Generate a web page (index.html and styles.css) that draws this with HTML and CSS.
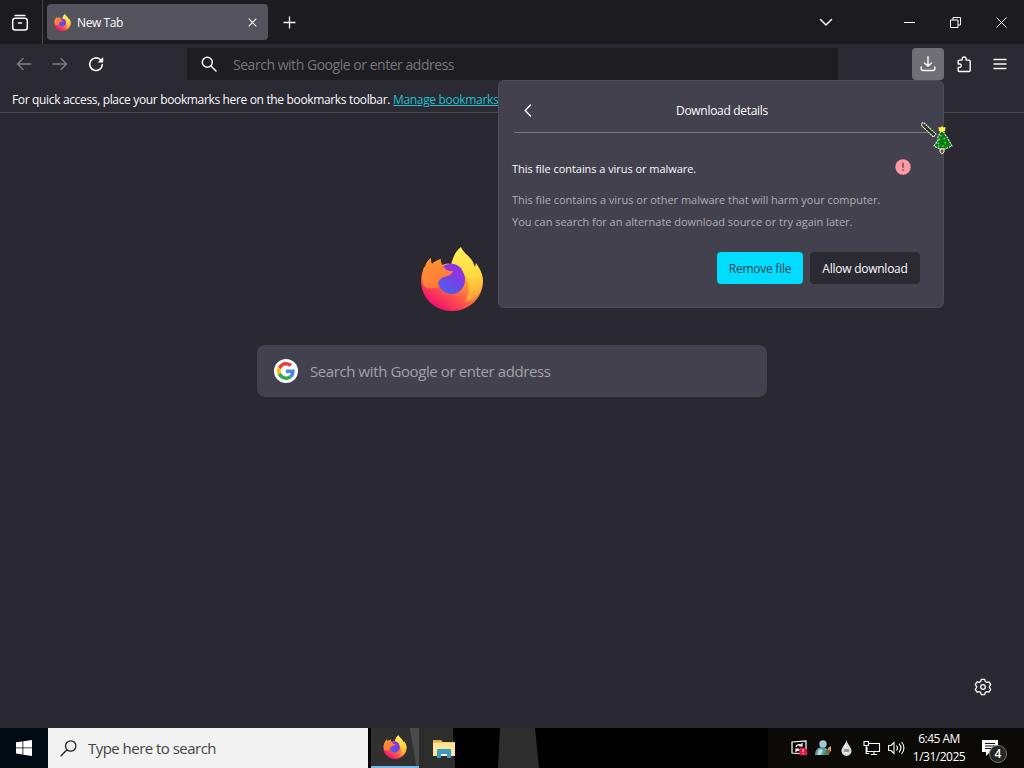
FILE: index.html
```html
<!DOCTYPE html>
<html lang="en">
  <head>
    <meta charset="utf-8">
    <title>New Tab</title>
    <link rel="stylesheet" href="styles.css">
  </head>
  <body>
    <!-- shared logo -->
    <svg class="defs" width="0" height="0">
      <defs>
        <linearGradient id="flame" x1="0.9" y1="0.15" x2="0.3" y2="0.95">
          <stop offset="0" stop-color="#ffd23a"/>
          <stop offset="0.35" stop-color="#ffa436"/>
          <stop offset="0.65" stop-color="#ff5f45"/>
          <stop offset="1" stop-color="#f5156c"/>
        </linearGradient>
        <linearGradient id="tail" x1="0.4" y1="0" x2="0.5" y2="1">
          <stop offset="0" stop-color="#fff25a"/>
          <stop offset="0.55" stop-color="#ffd83f"/>
          <stop offset="1" stop-color="#ff9c36"/>
        </linearGradient>
        <linearGradient id="globe" x1="0.8" y1="0" x2="0.3" y2="1">
          <stop offset="0" stop-color="#a12be0"/>
          <stop offset="0.5" stop-color="#7542e5"/>
          <stop offset="1" stop-color="#4a62e8"/>
        </linearGradient>
        <linearGradient id="head" x1="0" y1="0" x2="0.8" y2="1">
          <stop offset="0" stop-color="#ff9a30"/>
          <stop offset="1" stop-color="#ff7139"/>
        </linearGradient>
        <symbol id="firefox" viewBox="0 0 64 64">
          <path fill="url(#flame)" d="M5 20c1-4 3-7 6-9 0 3 0 5 1 6 2-2 5-4 9-5-1 2 0 4 1 6 4-2 8-2 12 0L41 6c4 4 8 7 12 12l2 3 1-3c5 6 7 10 7 16 0 17-14 30-31 30S1 51 1 34c0-5 1-10 4-14z"/>
          <path fill="url(#tail)" d="M31 18c2-8 4-13 10-18 2 6 9 9 12 15l2 5 1-4c6 8 8 16 5 25-3 8-9 13-16 14 3-6 5-13 3-20-2-8-8-14-17-17z"/>
          <ellipse cx="31.500" cy="33" rx="13.500" ry="14" fill="url(#globe)"/>
          <path fill="#8d36e0" d="M22 20c7-5 14-4 19 1l3 6c-4-3-8-2-10-3l-9 3z"/>
          <path fill="url(#head)" d="M5 20c1-4 3-7 6-9 0 3 0 5 1 6 2-2 5-4 9-5-1 3 1 6 3 8 2 4 5 4 9 4-1 4-5 5-9 6-5 2-7 6-6 11-5-1-9 3-14-2-3-5-2-13 0-19z"/>
        </symbol>
      </defs>
    </svg>

    <div class="tabbar">
      <div class="view">
        <svg width="18" height="18" viewBox="0 0 18 18" fill="none" stroke="#fbfbfe" stroke-width="1.5" stroke-linecap="round"><path d="M4 1.5h10"/><rect x="1.7" y="4.3" width="14.6" height="11.7" rx="2.5"/><path d="M7.5 9h3"/></svg>
      </div>
      <div class="tab">
        <svg width="17" height="17"><use href="#firefox"/></svg>
        <span class="tab-title">New Tab</span>
        <svg class="tab-close" width="9" height="9" viewBox="0 0 9 9" stroke="#fbfbfe" stroke-width="1.1"><path d="M.7.7l7.6 7.6M8.3.7L.7 8.3"/></svg>
      </div>
      <svg class="plus" width="13" height="13" viewBox="0 0 13 13" stroke="#fbfbfe" stroke-width="1.3"><path d="M6.5 .5v12M.5 6.5h12"/></svg>
      <div class="window">
        <svg class="chevron" width="14" height="9" viewBox="0 0 14 9" fill="none" stroke="#fbfbfe" stroke-width="1.5" stroke-linecap="round" stroke-linejoin="round"><path d="M1.5 1.5L7 7l5.500-5.500"/></svg>
        <svg width="11" height="11" viewBox="0 0 11 11" stroke="#fff"><path d="M0 5.500h11"/></svg>
        <svg width="11" height="11" viewBox="0 0 11 11" fill="none" stroke="#fff"><path d="M.5 3h7.500v7.500H.5zM3 3V.5h7.500V8H8"/></svg>
        <svg width="11" height="11" viewBox="0 0 11 11" stroke="#fff"><path d="M.5.5l10 10M10.500.5l-10 10"/></svg>
      </div>
    </div>

    <div class="nav">
      <div class="nav-left">
        <svg class="dim" width="16" height="14" viewBox="0 0 16 14" fill="none" stroke="#fbfbfe" stroke-width="1.4" stroke-linecap="round" stroke-linejoin="round"><path d="M15 7H1.500M7 1.500L1.500 7 7 12.500"/></svg>
        <svg class="dim" width="16" height="14" viewBox="0 0 16 14" fill="none" stroke="#fbfbfe" stroke-width="1.400" stroke-linecap="round" stroke-linejoin="round"><path d="M1 7h13.500M9 1.500L14.500 7 9 12.500"/></svg>
        <svg width="16" height="16" viewBox="0 0 16 16" fill="none" stroke="#fbfbfe" stroke-width="1.6" stroke-linecap="round"><path d="M14.300 8.500A6.300 6.300 0 1 1 12.200 3.500"/><path fill="#fbfbfe" stroke="none" d="M15.200.9v5.600H9.600z"/></svg>
      </div>
      <div class="urlbar">
        <svg width="16" height="16" viewBox="0 0 16 16" fill="none" stroke="#fbfbfe" stroke-width="1.500" stroke-linecap="round"><circle cx="6.300" cy="6.300" r="5"/><path d="M10 10l5 5"/></svg>
        <span>Search with Google or enter address</span>
      </div>
      <div class="nav-right">
        <div class="download">
          <svg width="16" height="16" viewBox="0 0 16 16" fill="none" stroke="#fbfbfe" stroke-width="1.400" stroke-linecap="round" stroke-linejoin="round"><path d="M8 .8v9.400M4.500 7L8 10.300 11.500 7M1.200 11v1.500c0 1.200.8 2 2 2h9.600c1.200 0 2-.8 2-2V11"/></svg>
        </div>
        <svg class="ext" width="16" height="17" viewBox="0 0 16 17" fill="none" stroke="#fbfbfe" stroke-width="1.400" stroke-linejoin="round"><path d="M2.200 8V5.200c0-.7.4-1.100 1.100-1.100h2.800V3c0-2.700 4-2.700 4 0v1.100h3c.7 0 1.100.4 1.100 1.100v9.200c0 .7-.4 1.100-1.100 1.100H3.300c-.7 0-1.100-.4-1.100-1.100v-3h1.500c2.100 0 2.100-3.400 0-3.400z"/></svg>
        <svg width="14" height="12" viewBox="0 0 14 12" stroke="#fbfbfe" stroke-width="1.400" stroke-linecap="round"><path d="M1 1.500h12M1 6h12M1 10.500h12"/></svg>
      </div>
    </div>

    <div class="bookmarks"><span class="hint">For quick access, place your bookmarks here on the bookmarks toolbar.</span><a class="manage">Manage bookmarks</a></div>

    <div class="page">
      <svg class="logo" width="64" height="64"><use href="#firefox"/></svg>
      <div class="search">
        <div class="google">
          <svg width="18" height="18" viewBox="0 0 48 48"><path fill="#ea4335" d="M24 9.500c3.500 0 6.700 1.200 9.200 3.600l6.900-6.900C35.900 2.400 30.500 0 24 0 14.600 0 6.500 5.400 2.600 13.200l8 6.200C12.400 13.700 17.700 9.500 24 9.500z"/><path fill="#4285f4" d="M47 24.500c0-1.600-.2-3.100-.4-4.500H24v9h12.900c-.6 3-2.300 5.500-4.800 7.200l7.700 6C44.400 38 47 31.800 47 24.500z"/><path fill="#fbbc05" d="M10.500 28.600c-.9-3-.9-6.200 0-9.200l-8-6.200c-3.400 6.800-3.400 14.800 0 21.600z"/><path fill="#34a853" d="M24 48c6.500 0 11.900-2.100 15.900-5.800l-7.700-6c-6.900 4.600-18.300 2.200-21.600-7.600l-8 6.200C6.500 42.600 14.600 48 24 48z"/></svg>
        </div>
        <span>Search with Google or enter address</span>
      </div>
      <svg class="gear" width="18" height="18" viewBox="0 0 18 18" fill="none" stroke="#fbfbfe" stroke-width="1.300" stroke-linejoin="round"><path d="M7.300 1.300h3.400l.6 2.200 1.500.9 2.200-.6 1.700 2.900L15.100 9l1.600 2.300-1.700 2.900-2.200-.6-1.500.9-.6 2.200H7.300l-.6-2.200-1.500-.9-2.200.6-1.700-2.900L2.900 9 1.300 6.700 3 3.800l2.200.6 1.500-.9z"/><circle cx="9" cy="9" r="2.300"/></svg>
    </div>

    <div class="taskbar">
      <div class="start">
        <svg width="16" height="16" viewBox="0 0 16 16" fill="#fff"><path d="M0 2.300l6.500-.9v6.100H0zM7.300 1.300L16 0v7.500H7.300zM0 8.300h6.500v6.200L0 13.600zM7.300 8.300H16V16l-8.700-1.300z"/></svg>
      </div>
      <div class="tasksearch">
        <svg width="17" height="17" viewBox="0 0 17 17" fill="none" stroke="#222" stroke-width="1.300"><circle cx="10.700" cy="6" r="5.200"/><path d="M7 9.700L.6 16.200"/></svg>
        <span>Type here to search</span>
      </div>
      <div class="app active"><svg width="24" height="24"><use href="#firefox"/></svg></div>
      <div class="app files">
        <svg width="22" height="19" viewBox="0 0 22 19"><path fill="#e9ae3c" d="M0 1h8l2 2h12v14H0z"/><path fill="#ffe79a" d="M0 3.500h22V17H0z"/><path fill="#3a9ac4" d="M4 11.500c0-1 .5-1.500 1.500-1.500h11c1 0 1.500.5 1.500 1.500V19h-4v-4H8v4H4z"/><path fill="#fff5cd" d="M8 15h6v2H8z"/></svg>
      </div>
      <svg class="wallpaper" width="100" height="40" viewBox="0 0 100 40"><path fill="#2d2d2d" d="M32 0h35l4 40H30z"/></svg>
      <div class="tray">
        <svg width="17" height="16" viewBox="0 0 17 16" fill="none"><path stroke="#fff" stroke-width="1.200" d="M1 2l14-1v13L1 13z"/><path stroke="#fff" stroke-width="1.200" d="M5 7c1-3 5-3 6-1M11 3v3H8M10 8c-1 3-4 3-5 1M5 12V9h3"/><circle cx="12" cy="11.500" r="4" fill="#e81140"/><path stroke="#fff" d="M12 9v3M12 13v1"/></svg>
        <svg width="17" height="16" viewBox="0 0 17 16"><circle cx="8" cy="4" r="3.700" fill="#9fc9cf"/><path fill="#5b9caa" d="M0 15c0-5 3-8 7-8s7 3 7 8z"/><path fill="#b9dad6" d="M4 9l4 1-2 5H2z"/><path fill="#359342" d="M10 11l4-3v7H9z"/><path fill="#d4b052" d="M13 8l3-2v5l-3 3z"/><path fill="#b83b2d" d="M12 11l3-2v3l-2 2z"/></svg>
        <svg class="drop" width="11" height="16" viewBox="0 0 11 16"><path fill="#dcdcdc" d="M5.500 0C6 4 10.500 7 10.500 11a5 5 0 0 1-10 0C.5 7 5 4 5.500 0z"/><path fill="#969696" d="M3 9h5v3H3z"/><path fill="#fff" d="M3 7l2-4v5zM3 12h3v2z"/></svg>
        <svg width="18" height="16" viewBox="0 0 18 16" fill="none" stroke="#fff" stroke-width="1.100"><path d="M6 3.500h10.500v8H4V7M8 14.500h6M11 11.500v3M1 1.500h4.500v4H1zM3.200 5.500v8h3"/></svg>
        <svg width="17" height="14" viewBox="0 0 17 14" fill="none" stroke="#fff" stroke-width="1.100"><path d="M.6 4.500H3L6 1.500v11L3 9.500H.6zM8.500 4.500c1.300 1.500 1.300 3.500 0 5M11 2.700c2.300 2.500 2.300 6 0 8.600M13.500 1c3.200 3.500 3.200 8.500 0 12"/></svg>
        <div class="clock"><span class="time">6:45 AM</span><span class="date">1/31/2025</span></div>
        <div class="notify">
          <svg width="16" height="16" viewBox="0 0 16 16"><path fill="#fff" d="M0 0h16v12H8l-4 4v-4H0z"/><path stroke="#111" d="M3 3.500h10M3 6h10M3 8.500h7"/></svg>
          <span class="count">4</span>
        </div>
      </div>
    </div>

    <!-- downloads popup -->
    <div class="panel">
      <div class="panel-head">
        <svg width="8" height="13" viewBox="0 0 8 13" fill="none" stroke="#fbfbfe" stroke-width="1.400" stroke-linecap="round" stroke-linejoin="round"><path d="M6.500 1L1.200 6.500 6.500 12"/></svg>
        <span class="panel-title">Download details</span>
      </div>
      <div class="warning">
        <span class="warning-title">This file contains a virus or malware.</span>
        <svg width="16" height="16" viewBox="0 0 16 16"><circle cx="8" cy="8" r="7.700" fill="#ff9aa2"/><path stroke="#7a3c4a" stroke-width="1.400" d="M8 3.800v5M8 10.300v1.500"/></svg>
      </div>
      <p class="text one">This file contains a virus or other malware that will harm your computer.</p>
      <p class="text two">You can search for an alternate download source or try again later.</p>
      <div class="buttons">
        <div class="button remove"><span>Remove file</span></div>
        <div class="button allow"><span>Allow download</span></div>
      </div>
    </div>

    <svg class="cursor" width="34" height="34" viewBox="0 0 34 34">
      <path fill="#26351f" stroke="#f4ffe8" stroke-width="1.100" stroke-dasharray="2 .6" d="M1.500 1.500l2-1L16 12l-2.500 3L2 4z"/>
      <path fill="#087a12" stroke="#f0fff0" stroke-width="1.100" stroke-dasharray="2 1" d="M22 7l4 7 1 1 5 9-7 3h-5l-6-3 4-6v-3z"/>
      <path fill="#843" stroke="#fff" d="M20 27h4v3l-2 2-2-2z"/>
      <path fill="#ffed49" d="M18.500 5l2 .5L22 4l1.500 1.500 2-.5-.5 4-3 1-3-1z"/>
      <path stroke="#60dc64" stroke-width="1.500" stroke-dasharray="1.500 2.500" d="M21 13l-3 9M24 16l2 8M18 24h6"/>
    </svg>
  </body>
</html>
```

FILE: styles.css
```css
* {
    box-sizing: border-box;
}

body {
    margin: 0;
    width: 1024px;
    height: 768px;
    overflow: hidden;
    display: flex;
    flex-direction: column;
    background: #2a2931;
    color: #fbfbfe;
    font-family: "Open Sans", "Noto Sans", sans-serif;
    font-size: 12px;
    white-space: nowrap;
}

svg {
    display: block;
    flex: none;
}

.defs {
    position: absolute;
}

/* tabs */
.tabbar {
    height: 44px;
    flex: none;
    display: flex;
    align-items: center;
    background: #1c1b20;
}

.view {
    width: 43px;
    height: 44px;
    padding: 14px 0 0 11px;
    border-right: 1px solid #47464e;
}

.tab {
    width: 221px;
    height: 36px;
    margin-left: 4px;
    padding: 0 11px 0 7px;
    display: flex;
    align-items: center;
    border-radius: 4px;
    background: #53525d;
}

.tab-title {
    margin-left: 6px;
    padding-top: 1px;
    letter-spacing: -0.4px;
}

.tab-close {
    margin-left: auto;
}

.plus {
    margin-left: 15px;
}

.window {
    margin-left: auto;
    padding-right: 17px;
    display: flex;
    align-items: center;
    gap: 35px;
}

.chevron {
    margin-right: 36px;
}

/* toolbar */
.nav {
    height: 40px;
    flex: none;
    display: flex;
    align-items: center;
    background: #2b2a32;
}

.nav-left {
    width: 187px;
    padding-left: 16px;
    display: flex;
    align-items: center;
    gap: 20px;
}

.dim {
    opacity: 0.4;
}

.urlbar {
    width: 651px;
    height: 32px;
    padding-left: 14px;
    display: flex;
    align-items: center;
    gap: 16px;
    background: #1e1d22;
    color: #77767c;
    font-size: 14px;
}

.urlbar span {
    padding-top: 1px;
    letter-spacing: -0.47px;
}

.nav-right {
    flex: 1;
    padding-right: 17px;
    display: flex;
    align-items: center;
    justify-content: flex-end;
}

.download {
    width: 32px;
    height: 32px;
    display: flex;
    align-items: center;
    justify-content: center;
    border-radius: 4px;
    background: #706f76;
}

.ext {
    margin: 0 21px 0 12px;
}

.bookmarks {
    height: 29px;
    flex: none;
    padding-left: 12px;
    line-height: 31px;
    border-bottom: 1px solid #4a4950;
    background: #2b2a32;
}

.hint {
    letter-spacing: -0.345px;
}

.manage {
    margin-left: 3px;
    color: #21bfd0;
    text-decoration: underline;
    letter-spacing: -0.33px;
}

/* new tab page */
.page {
    flex: 1;
    display: flex;
    flex-direction: column;
    align-items: center;
}

.logo {
    margin: 134px 120px 0 0;
}

.search {
    width: 510px;
    height: 52px;
    margin-top: 34px;
    padding-left: 17px;
    display: flex;
    align-items: center;
    gap: 12px;
    border-radius: 8px;
    background: #42414d;
    color: #a3a2a9;
    font-size: 15px;
}

.search span {
    letter-spacing: -0.4px;
}

.google {
    width: 24px;
    height: 24px;
    padding: 3px;
    border-radius: 50%;
    background: #fff;
}

.gear {
    margin: auto 32px 32px auto;
}

/* windows taskbar */
.taskbar {
    height: 40px;
    flex: none;
    display: flex;
    background: #000;
    color: #fff;
}

.start {
    width: 48px;
    padding: 12px 16px;
    background: #010b14;
}

.tasksearch {
    width: 320px;
    padding-left: 12px;
    display: flex;
    align-items: center;
    gap: 11px;
    background: #f2f2f2;
    color: #444;
    font-size: 15px;
    letter-spacing: -0.53px;
}

.app {
    width: 36px;
    display: flex;
    align-items: center;
    justify-content: center;
    background: #2d2d2d;
}

.active {
    width: 48px;
    margin-left: 3px;
    border-bottom: 2px solid #76b9ed;
    background: linear-gradient(80deg, #303030 82%, #4b4b4b 84%);
}

.files {
    justify-content: flex-end;
    background: linear-gradient(87deg, #2d2d2d 94%, #000 95%);
}

.wallpaper {
    margin-left: 13px;
}

.tray {
    flex: 1;
    margin-left: 200px;
    padding-left: 23px;
    display: flex;
    align-items: center;
    gap: 7px;
    background: #0c0a06;
}

.drop {
    margin: 0 4px 0 2px;
}

.clock {
    width: 54px;
    display: flex;
    flex-direction: column;
    align-items: center;
    line-height: 18px;
}

.time,
.date {
    letter-spacing: -0.5px;
}

.notify {
    position: relative;
    margin-left: 9px;
}

.count {
    position: absolute;
    left: 7px;
    top: 5px;
    width: 18px;
    height: 18px;
    border: 1px solid #777;
    border-radius: 50%;
    background: #252525;
    font-size: 12px;
    font-weight: 600;
    line-height: 16px;
    text-align: center;
}

/* popup over the page */
.panel {
    position: absolute;
    left: 498px;
    top: 80px;
    width: 446px;
    height: 228px;
    padding: 0 13px;
    border: 1px solid #4d4c57;
    border-radius: 6px;
    background: #42414d;
}

.panel-head {
    height: 52px;
    margin: 0 1px 0 2px;
    padding: 8px 0 0 10px;
    display: flex;
    align-items: center;
    border-bottom: 1px solid #78777f;
}

.panel-title {
    flex: 1;
    padding-right: 17px;
    text-align: center;
    letter-spacing: -0.3px;
}

.warning {
    margin-top: 26px;
    padding-right: 19px;
    display: flex;
    justify-content: space-between;
    line-height: 19px;
}

.warning-title {
    height: 18px;
    font-size: 11px;
    font-weight: 500;
    letter-spacing: -0.05px;
}

.text {
    margin: 0;
    color: #aeadb5;
    font-size: 11px;
    line-height: 22px;
    letter-spacing: -0.02px;
}

.one {
    margin-top: 12px;
}

.buttons {
    margin-top: 19px;
    padding-right: 10px;
    display: flex;
    justify-content: flex-end;
    gap: 7px;
}

.button {
    width: 86px;
    height: 32px;
    border-radius: 4px;
    line-height: 33px;
    text-align: center;
    letter-spacing: -0.25px;
}

.remove {
    background: #00ddff;
    color: #22414f;
}

.allow {
    width: 110px;
    background: #2b2a33;
}

.cursor {
    position: absolute;
    left: 920px;
    top: 122px;
}
```
